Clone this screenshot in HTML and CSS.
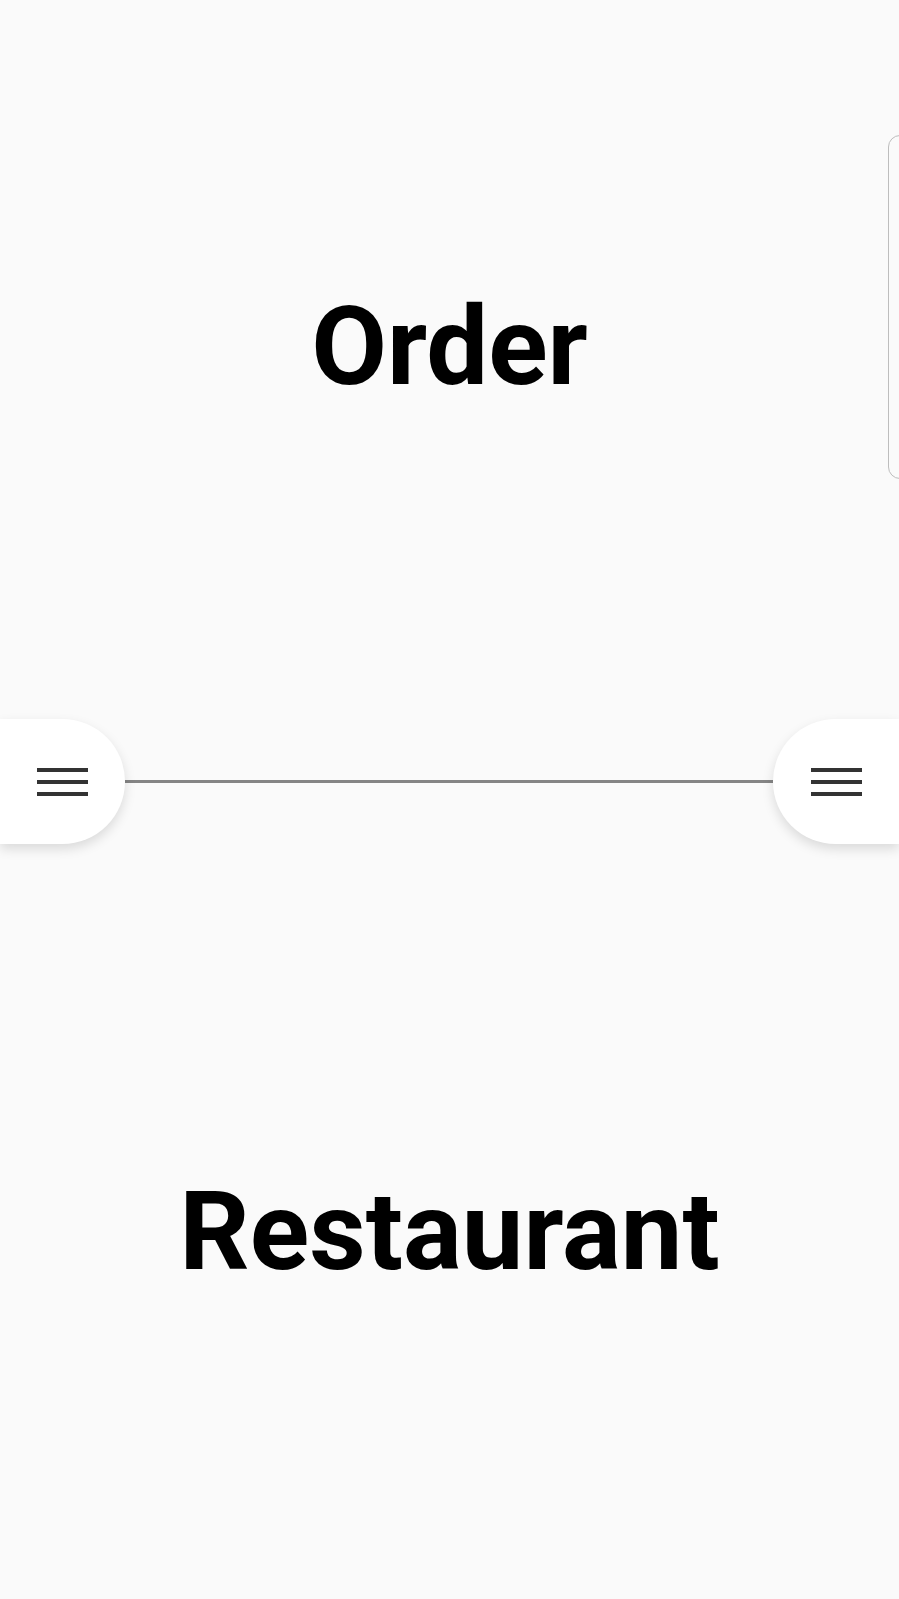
FILE: index.html
```html
<!DOCTYPE html>
<html>
<head>
<meta charset="utf-8">
<link rel="stylesheet" href="styles.css">
</head>
<body>
<div class="screen">
  <section class="top">
    <h1 class="title">Order</h1>
  </section>
  <div class="divider">
    <div class="pill pill-left">
      <span class="bars"><i></i><i></i><i></i></span>
    </div>
    <div class="line"></div>
    <div class="pill pill-right">
      <span class="bars"><i></i><i></i><i></i></span>
    </div>
  </div>
  <section class="bottom">
    <h1 class="title">Restaurant</h1>
  </section>
  <div class="side-card"></div>
</div>
</body>
</html>
```

FILE: styles.css
```css
html, body {
  margin: 0;
  padding: 0;
  background: #fafafa;
}
.screen {
  position: relative;
  width: 899px;
  height: 1599px;
  overflow: hidden;
  font-family: Roboto, "Liberation Sans", sans-serif;
}
.top {
  height: 719px;
  box-sizing: border-box;
  padding-top: 292px;
}
.bottom {
  padding-top: 333px;
}
.title {
  margin: 0;
  font-size: 110px;
  line-height: 110px;
  font-weight: 700;
  color: #000;
  text-align: center;
}
.divider {
  display: flex;
  align-items: center;
  height: 125px;
}
.line {
  flex: 1;
  height: 3px;
  background: #858585;
}
.pill {
  height: 125px;
  background: #fff;
  display: flex;
  align-items: center;
  justify-content: center;
  box-shadow: 0 5px 12px rgba(0, 0, 0, 0.13);
  position: relative;
  z-index: 1;
}
.pill-left {
  width: 125px;
  border-radius: 0 62.5px 62.5px 0;
}
.pill-right {
  width: 126px;
  border-radius: 62.5px 0 0 62.5px;
}
.bars {
  display: flex;
  flex-direction: column;
  gap: 8px;
}
.bars i {
  display: block;
  width: 51px;
  height: 4px;
  background: #333;
}
.side-card {
  position: absolute;
  left: 888px;
  top: 135px;
  width: 60px;
  height: 344px;
  box-sizing: border-box;
  border: 1.5px solid #bdbdbd;
  border-radius: 12px;
  background: #fafafa;
}
```
